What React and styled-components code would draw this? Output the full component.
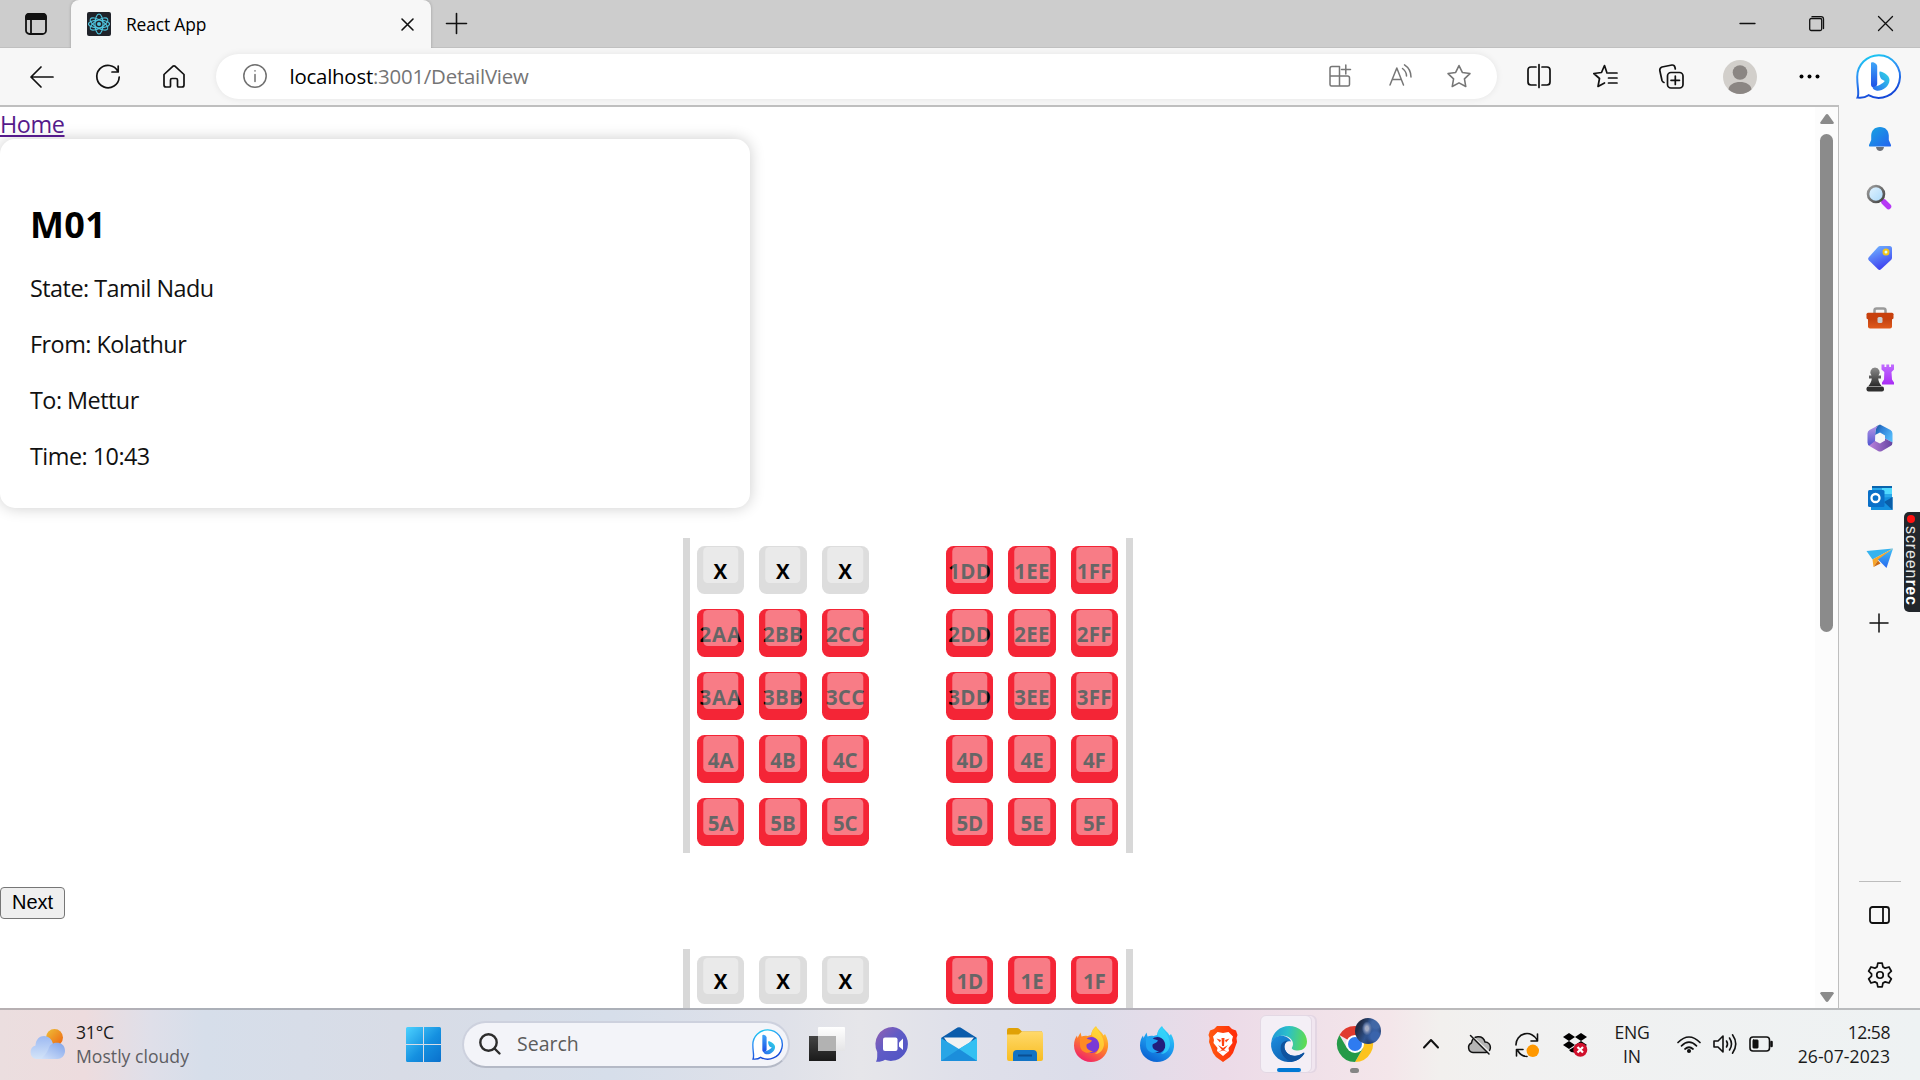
import React from "react";
import styled, { createGlobalStyle, css } from "styled-components";

const ui = `"Open Sans", "Noto Sans", sans-serif`;

const Global = createGlobalStyle`
  * { box-sizing: border-box; }
  html, body { margin: 0; padding: 0; overflow: hidden; background: #fff; }
  body { font-family: ${ui}; color: #000; }
`;

const Screen = styled.div`
  width: 1920px;
  height: 1080px;
  display: flex;
  flex-direction: column;
  overflow: hidden;
`;

/* ---------- shared ---------- */
const Svg = styled.svg`
  display: block;
  flex: none;
  overflow: visible;
  margin-left: ${(p) => p.$ml || 0}px;
  margin-top: ${(p) => p.$mt || 0}px;
`;

const Label = styled.span`
  display: block;
  white-space: pre;
  font-size: ${(p) => p.$size}px;
  line-height: ${(p) => p.$lh || 24}px;
  letter-spacing: ${(p) => p.$ls || 0}px;
  color: ${(p) => p.$color || "#1a1a1a"};
  margin-left: ${(p) => p.$ml || 0}px;
`;

const Icon = ({ w, h, box, ml, mt, stroke = "#111", sw = 1.5, children }) => (
  <Svg
    $ml={ml}
    $mt={mt}
    width={w}
    height={h}
    viewBox={box || `0 0 ${w} ${h}`}
    fill="none"
    stroke={stroke}
    strokeWidth={sw}
    strokeLinecap="round"
    strokeLinejoin="round"
  >
    {children}
  </Svg>
);

const STAR = "M12 1.5 15.2 8.1 22.5 9.2 17.2 14.3 18.5 21.6 12 18.1 5.5 21.6 6.8 14.3 1.5 9.2 8.8 8.1Z";

const BingMark = ({ size, ml, id }) => (
  <Svg $ml={ml} width={size} height={size} viewBox="0 0 45 45">
    <defs>
      <linearGradient id={id + "r"} x1="0" y1="0" x2="0.3" y2="1">
        <stop offset="0" stopColor="#17d3f0" />
        <stop offset="0.5" stopColor="#2f8df5" />
        <stop offset="1" stopColor="#1448d8" />
      </linearGradient>
      <linearGradient id={id + "b"} x1="0" y1="0" x2="0" y2="1">
        <stop offset="0" stopColor="#3fa6f8" />
        <stop offset="1" stopColor="#1d4fe6" />
      </linearGradient>
      <linearGradient id={id + "c"} x1="1" y1="0" x2="0" y2="1">
        <stop offset="0" stopColor="#2fd8e6" />
        <stop offset="1" stopColor="#2a6bf0" />
      </linearGradient>
    </defs>
    <path
      d="M23 1.2A21.3 21.3 0 1 1 12.5 41.2C9 43.7 5 44 1.5 43.6C3.6 39.5 1.2 34 1.2 23A21.6 21.6 0 0 1 23 1.2Z"
      fill="#fff"
      stroke={`url(#${id}r)`}
      strokeWidth="2"
    />
    <path d="M15 9.2C15 7 21.2 8.6 21.2 12.5V29.8C21.2 34 15 35 15 30.5Z" fill={`url(#${id}b)`} />
    <path d="M23.5 18C24 16.3 33.5 20.5 33.5 26C33.5 33 25 37.8 20.2 36.6C16.5 35.6 16 33 17.5 32.8C22 32.5 26.8 29.5 28.8 27L26 25.6C24.3 24.4 23 19.8 23.5 18Z" fill={`url(#${id}c)`} />
  </Svg>
);

/* ---------- browser chrome ---------- */
const TabStrip = styled.div`
  height: 48px;
  flex: none;
  display: flex;
  align-items: center;
  background: #cdcdcd;
  box-shadow: inset 0 -1px 0 #c0c0c0;
`;

const Tab = styled.div`
  width: 360px;
  height: 48px;
  margin-left: 24px;
  padding-left: 16px;
  display: flex;
  align-items: center;
  background: #f7f7f7;
  border-radius: 8px 8px 0 0;
  box-shadow: 0 0 3px rgba(0, 0, 0, 0.25);
`;

const TabTitle = styled.span`
  width: 275px;
  margin-left: 15px;
  margin-top: -1px;
  font-size: 17.4px;
  letter-spacing: -0.15px;
  line-height: 24px;
`;

const Toolbar = styled.div`
  position: relative;
  height: 57px;
  flex: none;
  display: flex;
  align-items: center;
  background: #f7f7f7;
  padding-left: 30px;
`;

const AddressBar = styled.div`
  width: 1281px;
  height: 45px;
  margin-left: 31px;
  margin-top: -1px;
  padding-left: 27px;
  display: flex;
  align-items: center;
  background: #fff;
  border-radius: 23px;
  box-shadow: 0 0 7px rgba(0, 0, 0, 0.08);
`;

const Url = styled.span`
  width: 1039px;
  margin-left: 22.5px;
  font-size: 20.4px;
  letter-spacing: -0.22px;
  line-height: 30px;
  color: #757575;
  b { font-weight: 400; color: #000; }
`;

const Body = styled.div`
  flex: none;
  height: 903px;
  display: flex;
  background: #f7f7f7;
`;

const Viewport = styled.div`
  width: 1839px;
  height: 903px;
  flex: none;
  display: flex;
  overflow: hidden;
  background: #fff;
  border-top: 2px solid #bfbfbf;
  border-right: 1px solid #bfbfbf;
`;

const Page = styled.main`
  width: 1815px;
  height: 901px;
  overflow: hidden;
  flex: none;
`;

const ScrollTrack = styled.div`
  width: 23px;
  background: #fcfcfc;
  display: flex;
  flex-direction: column;
  align-items: center;
  padding-top: 7px;
`;

const Thumb = styled.div`
  width: 13px;
  height: 498px;
  margin: 10px 0 360px;
  border-radius: 7px;
  background: #8b8b8b;
`;

/* ---------- page ---------- */
const HomeLink = styled.a`
  display: block;
  width: max-content;
  height: 32px;
  line-height: 35px;
  font-size: 23.4px;
  letter-spacing: -0.4px;
  color: #551a8b;
  text-decoration: underline;
  text-decoration-thickness: 2px;
  text-underline-offset: 2px;
`;

const Card = styled.section`
  width: 750px;
  height: 369px;
  padding: 61px 30px 0;
  border-radius: 15px;
  background: #fff;
  box-shadow: 0 0 15px rgba(0, 0, 0, 0.2);
`;

const Route = styled.h2`
  margin: 0 0 13px;
  font-size: 36px;
  line-height: 50px;
  font-weight: 700;
  letter-spacing: 0.3px;
`;

const Fact = styled.p`
  margin: 0;
  height: 56px;
  font-size: 23.4px;
  line-height: 51px;
  letter-spacing: -0.52px;
  color: #111;
`;

const Cabin = styled.div`
  width: 450px;
  margin: ${(p) => p.$top}px 0 0 683px;
  border: solid #d8d8d8;
  border-width: 0 7px;
`;

const SeatRow = styled.div`
  display: grid;
  grid-template-columns: repeat(7, 1fr);
  height: 63px;
`;

const seatFace = css`
  content: "";
  position: absolute;
  width: 75%;
  height: 75%;
  top: 1.5px;
  left: 50%;
  transform: translate(-50%, 0);
  background: rgba(255, 255, 255, 0.4);
  border-radius: 4.5px;
`;

const Seat = styled.div`
  position: relative;
  grid-column: ${(p) => p.$col};
  margin: 7.5px 8px 7.5px 7px;
  height: 48px;
  border-radius: 7.5px;
  background: ${(p) => (p.$off ? "#dddddd" : "#f42536")};
  display: flex;
  justify-content: center;
  font-size: 20.5px;
  font-weight: 700;
  line-height: 50px;
  letter-spacing: ${(p) => p.$ls}px;
  white-space: nowrap;
  &::before { ${seatFace} }
`;

const SeatText = styled.span`
  position: relative;
  z-index: ${(p) => (p.$off ? 1 : "auto")};
`;

const SeatUnder = styled.span`
  display: block;
`;

const NextButton = styled.button`
  display: block;
  width: 65px;
  height: 32px;
  margin-top: 34px;
  padding: 0 0 2px;
  font: 20px/26px "Liberation Sans", Arial, sans-serif;
  color: #000;
  background: #efefef;
  border: 1px solid #767676;
  border-radius: 4px;
`;

/* ---------- sidebar ---------- */
const Sidebar = styled.aside`
  position: relative;
  width: 81px;
  display: flex;
  flex-direction: column;
  align-items: center;
  padding-top: 18px;
`;

const SideSlot = styled.div`
  height: ${(p) => p.$h || 60}px;
  flex: none;
  display: flex;
  align-items: center;
  justify-content: center;
`;

const SideRule = styled.div`
  width: 42px;
  height: 1px;
  margin: 235px 0 3px;
  background: #bdbdbd;
`;

const Recorder = styled.div`
  position: absolute;
  right: 0;
  top: 407px;
  width: 16px;
  height: 100px;
  border-radius: 5px 0 0 5px;
  background: #22262b;
  color: #e6e6e6;
  display: flex;
  flex-direction: column;
  align-items: center;
  padding: 3px 3px 0 0;
  font: 16px/16px "Liberation Sans", sans-serif;
  letter-spacing: 0.9px;
  i { width: 8px; height: 8px; border-radius: 50%; background: #f11; margin-bottom: 3px; flex: none; }
  span { writing-mode: vertical-rl; white-space: nowrap; }
  b { letter-spacing: 0.7px; color: #fff; }
`;

/* ---------- taskbar ---------- */
const Taskbar = styled.footer`
  height: 72px;
  flex: none;
  display: flex;
  align-items: center;
  padding: 0 0 2px 29px;
  border-top: 2px solid rgba(120, 120, 125, 0.45);
  background: linear-gradient(90deg, #ebdedf 0, #eddcde 85px, #dfdfe9 150px, #d6deea 205px, #d8dce6 400px, #d6deea 610px, #dfe1e9 780px, #e6e6ea 860px, #dfe0ea 960px, #dcddea 1080px, #ecdbe8 1225px, #f4e6ea 1390px, #f2f0ee 1440px, #f1f1f1 1520px, #eef2f3 1920px);
`;

const Stack = styled.div`
  display: flex;
  flex-direction: column;
  align-items: ${(p) => p.$align || "flex-start"};
  width: ${(p) => p.$w}px;
  margin-left: ${(p) => p.$ml}px;
  flex: none;
`;

const SearchBox = styled.div`
  width: 328px;
  height: 47px;
  margin-left: 21px;
  padding-left: 15px;
  display: flex;
  align-items: center;
  flex: none;
  border-radius: 24px;
  background: #f3f4f9;
  border: 2px solid #cdd1de;
  border-bottom-color: #b4b9c6;
`;

const ActiveApp = styled.div`
  position: relative;
  width: 52px;
  height: 58px;
  margin-left: 22px;
  padding: 10px 0 0 5px;
  display: flex;
  flex-direction: column;
  align-items: center;
  flex: none;
  border-radius: 6px;
  background: #f4eff6;
  border: 1px solid #e3d8e4;
  box-shadow: 4px 0 0 -1px #f1e6f0, 5px 0 0 0 #e3d6e3;
`;

const Pill = styled.div`
  width: ${(p) => p.$w}px;
  height: 5px;
  margin-top: 6px;
  border-radius: 3px;
  background: ${(p) => p.$c};
`;

const ChromeApp = styled.div`
  position: relative;
  width: 37px;
  height: 58px;
  padding-top: 11px;
  margin-left: 24px;
  display: flex;
  flex-direction: column;
  align-items: center;
  flex: none;
`;

const ProfileBadge = styled.div`
  position: absolute;
  left: 19px;
  top: 3px;
  width: 26px;
  height: 26px;
  border-radius: 50%;
  background: radial-gradient(ellipse 5px 7px at 46% 40%, #a4acc4 0 30%, #6a80ad 60%, transparent 100%),
    radial-gradient(circle at 78% 70%, #3a64ac 0 16%, transparent 34%),
    radial-gradient(circle at 80% 25%, #4268a6 0 14%, transparent 32%),
    linear-gradient(115deg, #202c46 20%, #2f5490 50%, #1d3462 75%, #10182e);
`;

/* ---------- drawings ---------- */
const ReactIcon = () => (
  <Svg width="24" height="24" viewBox="0 0 24 24" fill="none" stroke="#4fc6e0" strokeWidth="1.1">
    <rect width="24" height="24" rx="2" fill="#20232a" stroke="none" />
    <circle cx="12" cy="12" r="2" fill="#4fc6e0" stroke="none" />
    <ellipse cx="12" cy="12" rx="10" ry="4" transform="rotate(30 12 12)" />
    <ellipse cx="12" cy="12" rx="10" ry="4" transform="rotate(90 12 12)" />
    <ellipse cx="12" cy="12" rx="10" ry="4" transform="rotate(150 12 12)" />
    <ellipse cx="12" cy="12" rx="10.500" ry="4" />
  </Svg>
);

const Bell = () => (
  <Svg width="24" height="26" viewBox="0 0 24 26">
    <defs><linearGradient id="bell" x1="0" y1="0" x2="1" y2="1"><stop stopColor="#17a5e0" /><stop offset="1" stopColor="#2463f0" /></linearGradient></defs>
    <path d="M8 21H16C15.5 24 13.5 25 12 25S8.500 24 8 21Z" fill="#6d7078" />
    <path d="M12 1C6.500 1 3.500 4.500 3.200 9.500V14L1 19C.8 20 1.200 20.500 2 20.500H22C22.800 20.500 23.200 20 23 19L20.800 14V9.500C20.500 4.500 17.500 1 12 1Z" fill="url(#bell)" />
  </Svg>
);

const Magnifier = () => (
  <Svg width="26" height="26" viewBox="0 0 26 26" $ml={-2}>
    <defs>
      <linearGradient id="lens" x1="0" y1="0" x2="1" y2="1"><stop stopColor="#e4f4ff" /><stop offset="1" stopColor="#a9d8fa" /></linearGradient>
      <linearGradient id="rim" x1="0" y1="0" x2="1" y2="1"><stop stopColor="#a0a0a0" /><stop offset="1" stopColor="#404040" /></linearGradient>
    </defs>
    <path d="M15 15 18 18" stroke="#666" strokeWidth="3" />
    <path d="M18 18 22.500 22.500" stroke="#b638f5" strokeWidth="5.500" strokeLinecap="round" />
    <circle cx="10" cy="10" r="8" fill="url(#lens)" stroke="url(#rim)" strokeWidth="2.600" />
  </Svg>
);

const Tag = () => (
  <Svg width="26" height="26" viewBox="0 0 26 26">
    <defs><linearGradient id="tag" x1="0.300" y1="0" x2="0.700" y2="1"><stop stopColor="#6fb0ff" /><stop offset="1" stopColor="#3a37ee" /></linearGradient></defs>
    <path d="M13 1H22.500Q25 1 25 3.500V12.500Q25 14 24 15L14 24.300Q12.500 25.500 11 24.300L1.800 15.200Q.5 13.700 1.800 12.200L11 2Q12 1 13 1Z" fill="url(#tag)" />
    <circle cx="19" cy="7" r="2.500" fill="#dff" stroke="#f5c518" strokeWidth="2" />
  </Svg>
);

const Toolbox = () => (
  <Svg width="28" height="22" viewBox="0 0 28 22">
    <defs><linearGradient id="tbx" x1="0" y1="0" x2="0" y2="1"><stop stopColor="#b83a0c" /><stop offset="1" stopColor="#e05a1c" /></linearGradient></defs>
    <path d="M8.500 7V3.500Q8.500 1.500 10.500 1.500H17.500Q19.500 1.500 19.500 3.500V7" fill="none" stroke="#9a9a9a" strokeWidth="2.500" />
    <rect x="2" y="8" width="24" height="13.500" rx="2" fill="url(#tbx)" />
    <rect x=".5" y="5.800" width="27" height="6.500" rx="1.500" fill="#c8410e" />
    <rect x="11.500" y="10" width="5" height="6" rx="1.500" fill="#c9cdd2" />
  </Svg>
);

const Chess = () => (
  <Svg width="28" height="28" viewBox="0 0 28 28">
    <defs>
      <linearGradient id="pawn" x1="0" y1="0" x2="0" y2="1"><stop stopColor="#8c8c8c" /><stop offset="1" stopColor="#2b2b2b" /></linearGradient>
      <linearGradient id="rook" x1="0" y1="0" x2="0" y2="1"><stop stopColor="#c06cff" /><stop offset="1" stopColor="#a92cf5" /></linearGradient>
    </defs>
    <path d="M15.500 .5H18.500V3H20.300V.5H23.200V3H25V.5H28V5.500L25.500 8 26 15.500 28 18.500V20.500H16V18.500L18 15.500 18.300 8 15.500 5.500Z" fill="url(#rook)" />
    <path d="M9 3.500A4.800 4.800 0 0 1 12.500 11.500H15V14.500H12.200C12.500 18 14 20 15.500 22H2.500C4 20 5.500 18 5.800 14.500H3V11.500H5.500A4.800 4.800 0 0 1 9 3.500Z" fill="url(#pawn)" />
    <rect x=".5" y="22.500" width="17.500" height="5" rx="2" fill="#2f2f2f" />
  </Svg>
);

const M365 = () => (
  <Svg width="26" height="28" viewBox="0 0 26 28">
    <defs>
      <linearGradient id="ma" x1="0" y1="0" x2="1" y2="0.600"><stop stopColor="#174f92" /><stop offset=".4" stopColor="#2f7fd6" /><stop offset="1" stopColor="#52b8f8" /></linearGradient>
      <linearGradient id="mb" x1="0" y1="0" x2="0" y2="1"><stop stopColor="#b796e6" /><stop offset="1" stopColor="#4f55d0" /></linearGradient>
      <linearGradient id="mc" x1="0" y1="0" x2="1" y2="0"><stop stopColor="#bb82dc" /><stop offset="1" stopColor="#6444a0" /></linearGradient>
    </defs>
    <path d="M9 2.500 13 .5 23.500 6Q25.500 7.200 25.500 9.500V18.500L18 14.500V11.500L13 8.500 8 11Z" fill="url(#ma)" />
    <path d="M11 1.500 8.500 6 8 18 2.500 22Q.5 20.800.5 18.500V9.500Q.5 7.200 2.500 6Z" fill="url(#mb)" />
    <path d="M2 21.700 8 17 13 19.500 18 16.500V14.500L25.500 18.500Q25.500 20.800 23.500 22L15 27Q13 28 11 27Z" fill="url(#mc)" />
    <path d="M13 9.300 17.300 11.700V16.300L13 18.700 8.700 16.300V11.700Z" fill="#f7f7f7" />
  </Svg>
);

const Outlook = () => (
  <Svg width="26" height="26" viewBox="0 0 26 26">
    <rect x="5" y="1" width="20" height="16" fill="#28a8ea" />
    <rect x="15" y="1" width="10" height="8" fill="#50d9ff" />
    <rect x="5" y="1" width="20" height="2" fill="#0a64ad" />
    <path d="M4 13 25.500 12V25H4Z" fill="#1490df" />
    <path d="M17 17 25.500 12V25Z" fill="#0a5ea8" />
    <rect x="1" y="5" width="16.500" height="17" rx="1.500" fill="#0a70c8" />
    <circle cx="8.500" cy="13" r="4" fill="none" stroke="#fff" strokeWidth="2.300" />
  </Svg>
);

const PaperPlane = () => (
  <Svg width="28" height="22" viewBox="0 0 28 22">
    <defs><linearGradient id="pp" x1="0" y1="0" x2="0" y2="1"><stop stopColor="#3fc0f5" /><stop offset="1" stopColor="#2768f0" /></linearGradient></defs>
    <path d="M.5 4 27 1.500 6.500 12.500Z" fill="#36b3ef" />
    <path d="M27 1.500 6.500 12.500 7.500 20 12 13.500Z" fill="#f7a62b" />
    <path d="M7.500 20 12 13.500 14.500 16.500Z" fill="#cc6b12" />
    <path d="M27 1.500 12 12.500 20.500 21Z" fill="url(#pp)" />
  </Svg>
);

const Weather = () => (
  <Svg width="36" height="30" viewBox="0 0 36 30">
    <defs>
      <linearGradient id="sun" x1="0" y1="0" x2="1" y2="1"><stop stopColor="#eec038" /><stop offset="1" stopColor="#ee6210" /></linearGradient>
      <linearGradient id="cl" x1="0" y1="0" x2="0" y2="1"><stop stopColor="#9cb9f2" /><stop offset="1" stopColor="#d4e4f8" /></linearGradient>
      <linearGradient id="cl2" x1="1" y1="0" x2="0" y2="1"><stop stopColor="#7fa3ea" /><stop offset="1" stopColor="#dbe8fb" /></linearGradient>
    </defs>
    <circle cx="25.500" cy="8.500" r="8.500" fill="url(#sun)" />
    <path d="M7 30A7 7 0 0 1 6.500 16.500C7 4 22 4 24 15L28 30Z" fill="url(#cl)" />
    <path d="M12 30C16 26 18 24 20 18.500C22 12 36 11 36 22C36 27 32 30 28.500 30H7Z" fill="url(#cl2)" />
  </Svg>
);

const Windows = () => (
  <Svg $ml={213} width="35" height="35" viewBox="0 0 35 35">
    <defs><linearGradient id="win" x1="0" y1="0" x2="1" y2="1" gradientUnits="objectBoundingBox"><stop stopColor="#4cd2ff" /><stop offset=".55" stopColor="#1590e0" /><stop offset="1" stopColor="#0a70cc" /></linearGradient></defs>
    <path d="M1.500 0H17V17H0V1.500Q0 0 1.500 0ZM18 0H33.500Q35 0 35 1.500V17H18ZM0 18H17V35H1.500Q0 35 0 33.500ZM18 18H35V33.500Q35 35 33.500 35H18Z" fill="url(#win)" />
  </Svg>
);

const TaskView = () => (
  <Svg $ml={19} width="36" height="34" viewBox="0 0 36 34">
    <defs>
      <linearGradient id="tv" x1="0" y1="0" x2="0" y2="1"><stop stopColor="#444" /><stop offset="1" stopColor="#1a1a1a" /></linearGradient>
      <linearGradient id="tw" x1="0" y1="0" x2="0" y2="1"><stop stopColor="#fff" /><stop offset="1" stopColor="#e4e4e6" /></linearGradient>
    </defs>
    <rect x="9" width="27" height="24" rx="1" fill="url(#tw)" />
    <path d="M0 9H9V24H27V34H0Z" fill="url(#tv)" />
    <rect x="9" y="9" width="18" height="15" fill="#b2b2b2" />
  </Svg>
);

const Chat = () => (
  <Svg $ml={31} width="34" height="35" viewBox="0 0 34 35">
    <defs><linearGradient id="ch" x1="0" y1="0" x2="1" y2="1"><stop stopColor="#9560b0" /><stop offset=".45" stopColor="#5f5bc6" /><stop offset="1" stopColor="#4d52c4" /></linearGradient></defs>
    <path d="M17 0A17 17 0 1 1 9 32.800C6 34.600 3 35 0 34.700C1.300 32.500 1.300 30 1.200 25A17.300 17.300 0 0 1 17 0Z" fill="url(#ch)" />
    <rect x="7" y="10.500" width="14.500" height="13.500" rx="2" fill="#fff" />
    <path d="M23 15.500 27 11.500V23L23 19.500Z" fill="#fff" />
  </Svg>
);

const Mail = () => (
  <Svg $ml={31} width="36" height="34" viewBox="0 0 36 34">
    <path d="M0 11 16.500 .6Q18 0 19.500 .6L36 11V20H0Z" fill="#0a5cab" />
    <path d="M3 10.500H33L22 24H12Z" fill="#f2f2f2" />
    <path d="M0 11 18 22 36 11V34H0Z" fill="#28a5e6" />
    <path d="M18 22 36 11V34Z" fill="#33c0f2" />
    <path d="M0 34 18 22 36 34Z" fill="#1b8edb" />
  </Svg>
);

const Explorer = () => (
  <Svg $ml={30} width="36" height="33" viewBox="0 0 36 33">
    <defs><linearGradient id="fo" x1="0" y1="0" x2="0" y2="1"><stop stopColor="#ffd96b" /><stop offset="1" stopColor="#f8bd22" /></linearGradient></defs>
    <path d="M0 2Q0 0 2 0H10Q11.500 0 12.500 1L15 3.500H35V8H0Z" fill="#e0a106" />
    <path d="M0 6.500H11.500L15 3.500H34Q36 3.500 36 5.500V31Q36 33 34 33H2Q0 33 0 31Z" fill="url(#fo)" />
    <path d="M6 33V26Q6 22 10 22H26Q30 22 30 26V33Z" fill="#1273c4" />
    <path d="M11 27.500H25" stroke="#0a4f92" strokeWidth="2" />
  </Svg>
);

const Fox = ({ id, ml, a, b, c, core }) => (
  <Svg $ml={ml} width="34" height="36" viewBox="0 0 34 36">
    <defs>
      <linearGradient id={id} x1=".8" y1="0" x2=".3" y2="1"><stop stopColor={a} /><stop offset=".45" stopColor={b} /><stop offset="1" stopColor={c} /></linearGradient>
    </defs>
    <path d="M22 0C24 4 28 6 29.500 9.500L31 8C33.500 12 34.500 17 34 21C33 30 25.500 36 17 36C8 36 0 29 0 19.500C0 15 1.500 11.500 3 9.500L3.500 12L6.500 6.500L7.500 10.500C10 9.500 12 9.500 13.500 10L17 9C17.500 5 19.500 2 22 0Z" fill={`url(#${id})`} />
    <circle cx="17.500" cy="19" r="8" fill={core} />
    <path d="M6 12C9 10 12 11 13.500 13C15.500 13.500 17 14 18 14.500C16.500 17.500 13 17 12.500 19C12 22.500 15 25 19 25C14 29 6 26 6 19Z" fill={b} />
    <path d="M22 1C24.500 6 30 10 30 19C29 25 25 28 21 28C26 24 26 19 24 15C22 11.500 18.500 11 17.500 9C17.500 5 19.500 3 22 1Z" fill={a} opacity=".75" />
  </Svg>
);

const Brave = () => (
  <Svg $ml={34} width="30" height="36" viewBox="0 0 30 36">
    <defs><linearGradient id="br" x1="0" x2="1"><stop stopColor="#ff5a10" /><stop offset="1" stopColor="#ff2a0a" /></linearGradient></defs>
    <path d="M9 0H21L24 3 28 4.500 29.500 9 28.500 12 29 16 25 27 22 31 15 36 8 31 5 27 1 16 1.500 12 .5 9 2 4.500 6 3Z" fill="url(#br)" />
    <path d="M9.500 6 15 7 20.500 6 25 10.500 24 14 24.500 17 20.500 22 21 25 15 30 9 25 9.500 22 5.500 17 6 14 5 10.500Z" fill="#fff" />
    <path d="M8.500 12.500 13 14 12 16.500ZM21.500 12.500 17 14 18 16.500ZM13.500 12H16.500L16 20H14ZM10 19 15 22 20 19 16 24 20 26 15 24.500 10 26 14 24Z" fill="#ff4210" />
  </Svg>
);

const Edge = () => (
  <Svg width="36" height="36" viewBox="0 0 36 36">
    <defs>
      <linearGradient id="e1" x1="0" y1=".3" x2="1" y2=".4"><stop stopColor="#1e96d8" /><stop offset=".45" stopColor="#2bbfca" /><stop offset="1" stopColor="#5fdc50" /></linearGradient>
      <linearGradient id="e2" x1="0" y1="0" x2="1" y2="1"><stop stopColor="#1b8fe0" /><stop offset="1" stopColor="#0c4fa0" /></linearGradient>
    </defs>
    <path d="M.3 16C1.500 6.500 9 0 18 0C28 0 36 7 36 15.500C36 21.500 31.500 24.500 27 24.500C22.500 24.500 20 23 21 21.500C23.500 18 21.500 11.500 14.500 10C8 9 3 12 .3 16Z" fill="url(#e1)" />
    <path d="M.1 17C2 11 9 8.500 14.500 10.500C18 12 19.500 14 20 15.500C15.500 14 13 17.500 13.500 22C14.500 28 21 30.500 26 29.500C29 29 31 27.500 32.500 26.800C33.200 26.500 33.600 27 33 28C29 34 23 36.500 17 36C7 35.500 -.8 27 .1 17Z" fill="url(#e2)" />
    <path d="M10 19C11 16 14 14.500 17 14.500C13.500 17 13 20 14 23.500C16 29 22 31 27 29.500C29.500 29 31 27.500 32.500 26.800C33.200 26.500 33.600 27 33 28C29.500 33 25 35 21 35.500C14 34 8 27 10 19Z" fill="#0e539f" />
  </Svg>
);

const Chrome = () => (
  <Svg width="36" height="36" viewBox="0 0 36 36">
    <path d="M18 18 2.400 9A18 18 0 0 1 33.600 9H18Z" fill="#e03a2e" />
    <path d="M18 18 33.600 9A18 18 0 0 1 18 36L25.800 22.500Z" fill="#fcc31e" />
    <path d="M18 18 10.200 22.500 2.400 9A18 18 0 0 0 18 36L25.800 22.500Z" fill="#249a48" />
    <path d="M18 9H33.600L25.800 22.500Z" fill="#fcc31e" />
    <circle cx="18" cy="18" r="9" fill="#fff" />
    <circle cx="18" cy="18" r="7" fill="#2f7bf0" />
  </Svg>
);

/* ---------- seat data ---------- */
const COLS = [["A", 1], ["B", 2], ["C", 3], ["D", 5], ["E", 6], ["F", 7]];
const upper = [1, 2, 3, 4, 5].map((n) =>
  COLS.map(([c, col]) => ({ col, off: n === 1 && col < 4, text: n + (n < 4 ? c + c : c) }))
);
const lower = [COLS.map(([c, col]) => ({ col, off: col < 4, text: "1" + c }))];

const spacing = (text) => (text.length < 3 ? -0.1 : text.endsWith("AA") ? 0.8 : 0.25);

const Deck = ({ rows, top }) => (
  <Cabin $top={top}>
    {rows.map((row, i) => (
      <SeatRow key={i}>
        {row.map((s) => (
          <Seat key={s.col} $col={s.col} $off={s.off} $ls={spacing(s.text)}>
            {s.off ? <SeatText $off>X</SeatText> : <SeatUnder>{s.text}</SeatUnder>}
          </Seat>
        ))}
      </SeatRow>
    ))}
  </Cabin>
);

export default function App() {
  return (
    <Screen>
      <Global />
      <TabStrip>
        <Icon w={22} h={22} ml={25} sw={1.8}>
          <rect x="1" y="1" width="20" height="20" rx="3.500" />
          <path d="M1 6V4Q1 1 4 1H18Q21 1 21 4V6Z" fill="#111" />
          <path d="M6 6V21" />
        </Icon>
        <Tab>
          <ReactIcon />
          <TabTitle>React App</TabTitle>
          <Icon w={13} h={13} sw={1.6}><path d="M1 1 12 12M12 1 1 12" /></Icon>
        </Tab>
        <Icon w={21} h={21} ml={15} mt={-2} sw={1.6}><path d="M10.500 .5V20.500M.5 10.500H20.500" /></Icon>
        <Icon w={15} h={15} ml={1273} mt={-1} sw={1.300}><path d="M0 7.500H15" /></Icon>
        <Icon w={15} h={15} ml={54} mt={-1} sw={1.300}>
          <rect x=".7" y="2.500" width="12" height="12" rx="1.500" />
          <path d="M3 .7H12Q14.500 .7 14.500 3V12.500" />
        </Icon>
        <Icon w={15} h={15} ml={54} mt={-1} sw={1.300}><path d="M.5 .5 14.500 14.500M14.500 .5 .5 14.500" /></Icon>
      </TabStrip>

      <Toolbar>
        <Icon w={24} h={22} sw={1.7}><path d="M23 11H1M11 1 1 11 11 21" /></Icon>
        <Icon w={24} h={24} ml={42} sw={1.7}><path d="M22 6.500A11.200 11.200 0 1 0 23.200 12M22.200 1V7H16" /></Icon>
        <Icon w={22} h={23} ml={43} sw={1.7}>
          <path d="M1 9.500 9.800 1.300Q11 .4 12.200 1.300L21 9.500V20Q21 22 19 22H15.500Q14.500 22 14.500 21V15Q14.500 13.500 13 13.500H9Q7.500 13.500 7.500 15V21Q7.500 22 6.500 22H3Q1 22 1 20Z" />
        </Icon>
        <AddressBar>
          <Icon w={24} h={24} stroke="#707070"><circle cx="12" cy="12" r="11.200" /><path d="M12 10.500V17.500M12 6.800V7" /></Icon>
          <Url><b>localhost</b>:3001/DetailView</Url>
          <Icon w={22} h={22} stroke="#767676">
            <path d="M10.500 1.500H3Q1 1.500 1 3.500V19.500Q1 21 2.500 21H19Q20.500 21 20.500 19.500V13Q20.500 11 18.500 11H1M10.500 1.500V21M16.800 0V9M12.500 4.500H21.500" />
          </Icon>
          <Icon w={24} h={22} ml={38} mt={-2} stroke="#767676">
            <path d="M1 21 7.800 4 14.500 21M3.500 15.500H12M13.500 4.500Q17.500 7.500 17.500 12M15.500 .8Q22 5 22 13" />
          </Icon>
          <Icon w={24} h={24} ml={34} stroke="#767676" box="0.5 0 23 23"><path d={STAR} /></Icon>
        </AddressBar>
        <Icon w={24} h={24} ml={30} mt={-1} sw={1.7}>
          <path d="M9 3H4Q1 3 1 6V18Q1 21 4 21H9M15 3H20Q23 3 23 6V18Q23 21 20 21H15M12 .5V23.500" />
        </Icon>
        <Icon w={25} h={24} ml={42} mt={-1} sw={1.7}>
          <path d="M14 9 11.500 1.500 8.500 8.500 .8 9.500 6.500 14.500 5 22.500 11.500 19M15.500 9H24M15.500 14H24M15.500 19H24" />
        </Icon>
        <Icon w={25} h={25} ml={41} mt={-1} sw={1.7}>
          <rect x="8.500" y="8.500" width="15.500" height="15.500" rx="3.500" />
          <path d="M16.300 12V20.500M12 16.300H20.500M5 18.500Q3.500 18 3 16.500L.8 6.500Q.5 4 3 3L13 1Q15.500 .8 16 3.500L16.300 5" />
        </Icon>
        <Svg $ml={39} width="34" height="34" viewBox="0 0 34 34">
          <circle cx="17" cy="17" r="17" fill="#d2cfcb" />
          <circle cx="17" cy="12.500" r="7.300" fill="#8b8683" />
          <path d="M5.500 29.500C6 19.500 28 19.500 28.500 29.500A17 17 0 0 1 5.500 29.500Z" fill="#8b8683" />
        </Svg>
        <Svg $ml={42} width="21" height="5" viewBox="0 0 21 5">
          <circle cx="2.500" cy="2.500" r="2" /><circle cx="10.500" cy="2.500" r="2" /><circle cx="18.500" cy="2.500" r="2" />
        </Svg>
        <BingMark size={45} ml={36} id="bt" />
      </Toolbar>

      <Body>
        <Viewport>
          <Page>
            <HomeLink>Home</HomeLink>
            <Card>
              <Route>M01</Route>
              <Fact>State: Tamil Nadu</Fact>
              <Fact>From: Kolathur</Fact>
              <Fact>To: Mettur</Fact>
              <Fact>Time: 10:43</Fact>
            </Card>
            <Deck rows={upper} top={30} />
            <NextButton>Next</NextButton>
            <Deck rows={lower} top={29.7} />
          </Page>
          <ScrollTrack>
            <Svg width="14" height="10" viewBox="0 0 14 10"><path d="M5.500 1Q7 -.8 8.500 1L13.800 8.500Q14 10 12.500 10H1.500Q0 10 .2 8.500Z" fill="#8b8b8b" /></Svg>
            <Thumb />
            <Svg width="14" height="10" viewBox="0 0 14 10"><path d="M5.500 9Q7 10.800 8.500 9L13.800 1.500Q14 0 12.500 0H1.500Q0 0 .2 1.500Z" fill="#8b8b8b" /></Svg>
          </ScrollTrack>
        </Viewport>
        <Sidebar>
          <SideSlot $h={31}><Bell /></SideSlot>
          <SideSlot $h={86}><Magnifier /></SideSlot>
          <SideSlot $h={36}><Tag /></SideSlot>
          <SideSlot $h={84}><Toolbox /></SideSlot>
          <SideSlot $h={36}><Chess /></SideSlot>
          <SideSlot $h={84}><M365 /></SideSlot>
          <SideSlot $h={36}><Outlook /></SideSlot>
          <SideSlot $h={84}><PaperPlane /></SideSlot>
          <SideSlot $h={46}><Icon w={18} h={18} sw={1.500}><path d="M8 0V18M-1 9H17" /></Icon></SideSlot>
          <SideRule />
          <SideSlot $h={60}>
            <Icon w={21} h={18} sw={1.800}><rect x="1" y="1" width="19" height="16" rx="2.500" /><path d="M14 1V17" /></Icon>
          </SideSlot>
          <SideSlot $h={60}>
            <Icon w={26} h={26} box="0 0 24 24" sw={1.600}>
              <path d="M10 1H14L14.700 4.500 16.800 5.700 20.300 4.600 22.500 8.500 19.800 11V13L22.500 15.500 20.300 19.400 16.800 18.300 14.700 19.500 14 23H10L9.300 19.500 7.200 18.300 3.700 19.400 1.500 15.500 4.200 13V11L1.500 8.500 3.700 4.600 7.200 5.700 9.300 4.500Z" />
              <circle cx="12" cy="12" r="3" />
            </Icon>
          </SideSlot>
          <Recorder><i /><span>screen<b>rec</b></span></Recorder>
        </Sidebar>
      </Body>

      <Taskbar>
        <Weather />
        <Stack $ml={11} $w={117}>
          <Label $size={17.600} $ls={-0.2}>31°C</Label>
          <Label $size={17.600} $ls={0.02} $color="#5d5d62">Mostly cloudy</Label>
        </Stack>
        <Windows />
        <SearchBox>
          <Icon w={22} h={22} sw={2.400} stroke="#2c2c2c"><circle cx="9.500" cy="9.500" r="8.200" /><path d="M15.500 15.500 20.500 20.500" /></Icon>
          <Label $size={19.500} $ls={0} $ml={16} $color="#5c5c5c">Search</Label>
          <BingMark size={31} ml={173} id="bs" />
        </SearchBox>
        <TaskView />
        <Chat />
        <Mail />
        <Explorer />
        <Fox id="f1" ml={31} a="#ffdc3a" b="#ff8a24" c="#f0206a" core="#7a3ad6" />
        <Fox id="f2" ml={32} a="#35d8fb" b="#1fa2f2" c="#0a5fd0" core="#221f7c" />
        <Brave />
        <ActiveApp><Edge /><Pill $w={24} $c="#0078d4" /></ActiveApp>
        <ChromeApp><Chrome /><ProfileBadge /><Pill $w={9} $c="#858585" /></ChromeApp>

        <Icon w={16} h={9} ml={50} mt={-1} sw={2}><path d="M1 8.500 8 1 15 8.500" /></Icon>
        <Icon w={24} h={20} ml={28} mt={1} sw={1.500}>
          <path d="M6 17.500A5 5 0 0 1 4.500 8C5.500 0 16 -.5 18 7C25 7 25 17.500 19 17.500Z" fill="#b5b5b5" />
          <path d="M5.200 1.800 22.500 17.500" stroke="#eee" strokeWidth="2" /><path d="M3.500 .5 22 19" />
        </Icon>
        <Icon w={24} h={24} ml={24} mt={1} sw={1.600}>
          <path d="M1 12A11 11 0 0 1 22 7M22.500 1V8H16M1.500 23V16.500H8M3 18A11 11 0 0 0 12 23.500" />
          <circle cx="17.800" cy="17.800" r="6.200" fill="#ff9800" stroke="none" />
        </Icon>
        <Svg $ml={24} $mt={2} width="24" height="24" viewBox="0 0 24 24">
          <path d="M6 0 12 4 6 8 0 4ZM18 0 24 4 18 8 12 4ZM6 8 12 12 6 16 0 12ZM18 8 24 12 18 16 12 12ZM6 17 12 13.500 14 20 8 19Z" />
          <circle cx="17.300" cy="16.800" r="7" fill="#d0102c" />
          <path d="M14.500 14 20 19.600M20 14 14.500 19.600" stroke="#fff" strokeWidth="2.200" />
        </Svg>
        <Stack $ml={24} $w={42} $align="center">
          <Label $size={17.600} $ls={-0.2}>ENG</Label>
          <Label $size={17.600} $ls={-0.2}>IN</Label>
        </Stack>
        <Icon w={24} h={17} ml={24} sw={1.700}>
          <path d="M1 6.500Q12 -4.500 23 6.500M4.500 9.800Q12 2.500 19.500 9.800M8 13Q12 9.500 16 13" /><circle cx="12" cy="15" r="1.200" fill="#111" />
        </Icon>
        <Icon w={24} h={20} ml={12} sw={1.600}>
          <path d="M1 7H5L10 2V18L5 13H1ZM13.500 7Q15.500 10 13.500 13M16.500 4Q20.500 10 16.500 16M19.500 .8Q26 10 19.500 19.200" />
        </Icon>
        <Icon w={24} h={16} ml={12} sw={1.600}>
          <rect x="1" y="1" width="19.500" height="14" rx="3" /><rect x="4" y="4" width="5" height="8" rx=".5" fill="#111" stroke="#111" strokeWidth="1" /><path d="M22.500 6V10" strokeWidth="2.600" />
        </Icon>
        <Stack $ml={17} $w={100} $align="flex-end">
          <Label $size={17.600} $ls={-0.5}>12:58</Label>
          <Label $size={17.600} $ls={0.05}>26-07-2023</Label>
        </Stack>
      </Taskbar>
    </Screen>
  );
}
